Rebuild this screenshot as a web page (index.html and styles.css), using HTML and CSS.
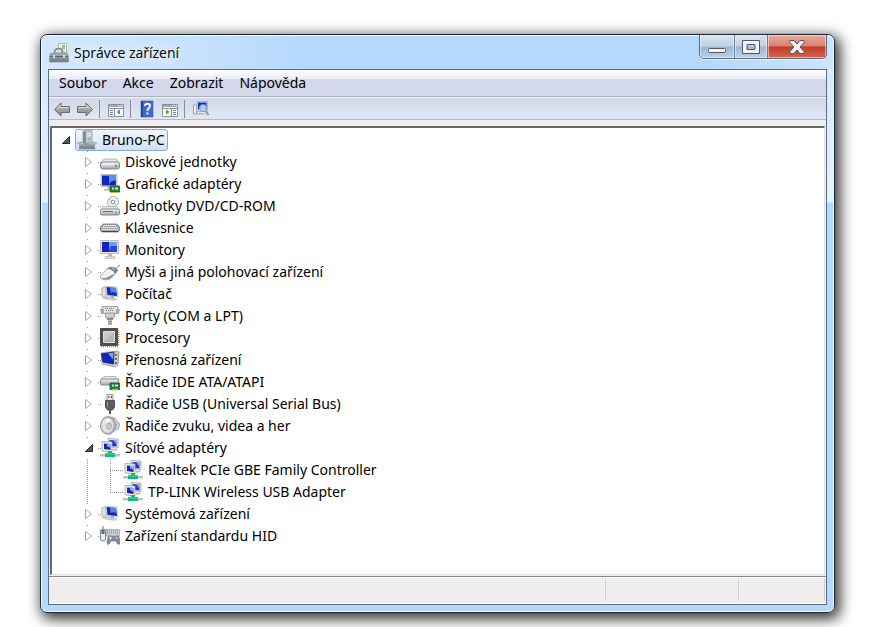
FILE: index.html
```html
<!DOCTYPE html>
<html lang="cs">
<head>
  <meta charset="UTF-8" />
  <meta name="viewport" content="width=device-width, initial-scale=1.0"/>
  <title>Správce zařízení</title>
  <link rel="stylesheet" href="styles.css">
</head>
<body>

  <!-- icon set -->
  <svg class="sprite" aria-hidden="true">
    <defs>
      <linearGradient id="gray" x1="0" y1="0" x2="0" y2="1">
        <stop offset="0" stop-color="#f4f5f6"/><stop offset="1" stop-color="#a3a8ae"/>
      </linearGradient>
      <linearGradient id="dark" x1="0" y1="0" x2="0" y2="1">
        <stop offset="0" stop-color="#a9b4bd"/><stop offset="1" stop-color="#6b7680"/>
      </linearGradient>
      <linearGradient id="blue" x1="0" y1="0" x2="1" y2=".3">
        <stop offset="0" stop-color="#0a1ea8"/><stop offset=".45" stop-color="#1230d0"/><stop offset=".6" stop-color="#6f9af5"/><stop offset="1" stop-color="#1c45e0"/>
      </linearGradient>
      <linearGradient id="arrow" x1="0" y1="0" x2="0" y2="1">
        <stop offset="0" stop-color="#c4c4c4"/><stop offset="1" stop-color="#858585"/>
      </linearGradient>
    </defs>
    <symbol id="i-app" viewBox="0 0 20 20">
      <path d="M9.500.500h8v10h-8z" fill="#eef1ec" stroke="#b3bab5"/>
      <path d="M13 2h3v4h-3z" fill="#8fce6f"/>
      <path d="M5 10l2-4h6l3 4z" fill="#dfe4e7" stroke="#929ba2" stroke-width=".7"/>
      <path d="M5.500 10c0-6 8-6 8 0" fill="none" stroke="#7c868e" stroke-width="1.300"/>
      <path d="M2 10h16l1.500 3v6H.5v-6z" fill="url(#dark)" stroke="#848e96" stroke-width=".7"/>
      <path d="M1 13.500h18" stroke="#5a646c"/>
      <path d="M4 12h2v3H4zM14 12h2v3h-2z" fill="#d4dade"/>
    </symbol>
    <symbol id="i-pc" viewBox="0 0 20 20">
      <path d="M6 1l6-1 3 1v13l-6 1-3-1z" fill="#c3c8cc" stroke="#8d949b" stroke-width=".7"/>
      <path d="M6 1l3 1v13l-3-1z" fill="#858d94"/>
      <path d="M10 4l4-.5M10 6l4-.5" stroke="#f3f4f5"/>
      <circle cx="12" cy="9" r="1" fill="#56cb57"/>
      <path d="M3 13h14l1 6H2z" fill="url(#dark)" stroke="#8b959d" stroke-width=".7"/>
      <path d="M0 13l4-1 5 2 7-2 4 1-3 2-7-1-7 1z" fill="#b4bdc4" stroke="#8b959d" stroke-width=".5"/>
    </symbol>
    <symbol id="i-disk" viewBox="0 0 20 20">
      <path d="M4 7h12l3 4H1z" fill="#e3e5e6" stroke="#b3b7ba"/>
      <rect x=".5" y="10" width="19" height="7" rx="2" fill="url(#gray)" stroke="#85898d"/>
      <path d="M3 12h11" stroke="#fff"/>
      <circle cx="16" cy="14" r="1.200" fill="#3dcb41"/>
    </symbol>
    <symbol id="i-monitor" viewBox="0 0 20 20">
      <path d="M.5.500h18v13H.5z" fill="#e6e4dc" stroke="#bfbeb6"/>
      <path d="M2 2h15v10H2z" fill="#1026bd"/>
      <path d="M9 2h8v5c-4 0-7 1-8 4z" fill="#7499f3"/>
      <path d="M11 6h6v6H9c0-3 1-5 2-6z" fill="#2347df"/>
      <path d="M8 14h4v3H8z" fill="#bab9b2"/>
      <path d="M5 16.500h10v2H5z" fill="#e2e0d7" stroke="#b5b4ad" stroke-width=".6"/>
    </symbol>
    <symbol id="i-gpu" viewBox="0 0 20 20">
      <path d="M1 .500h16v12H1z" fill="#e2e0d7" stroke="#bfbeb6"/>
      <path d="M2 1.500h14v10H2z" fill="#1026bd"/>
      <path d="M9 1.500h7v5c-4 0-6 1-7 4z" fill="#6289ef"/>
      <path d="M7 13h4v2H7zM4 15h9v2H4z" fill="#c5c4bd"/>
      <path d="M10 12h9.500v6H10z" fill="#2e7b45" stroke="#17532a" stroke-width=".8"/>
      <path d="M12 13.500h2v2h-2zM15 13.500h3v2h-3z" fill="#c3e3b4"/>
      <path d="M12 18h5v1h-5z" fill="#d4b644"/>
    </symbol>
    <symbol id="i-dvd" viewBox="0 0 20 20">
      <circle cx="13" cy="6" r="5.500" fill="#edf0ef" stroke="#b2b7ba"/>
      <path d="M13 6l-4-3M13 6l4 4" stroke="#a4d8a7"/>
      <circle cx="13" cy="6" r="1.800" fill="#fff" stroke="#8b8f92"/>
      <path d="M3 10.500h14l2 3H1z" fill="#e3e5e6" fill-opacity=".8" stroke="#aaaeb2" stroke-width=".8"/>
      <rect x=".5" y="13" width="19" height="6" rx="1.500" fill="url(#gray)" stroke="#85898d"/>
      <path d="M3 15.500h10" stroke="#686d71"/>
      <circle cx="16" cy="16.500" r="1" fill="#3dbb41"/>
    </symbol>
    <symbol id="i-keyboard" viewBox="0 0 20 20">
      <path d="M3 6h14l2.500 3v3.500q-1 1.500-2 1.500h-15q-1 0-2-1.500V9z" fill="#a4a7aa" stroke="#73787c" stroke-width=".8"/>
      <path d="M3.500 7.500h13M2.500 9.500h15M2 11.500h16" stroke="#f7f7f7" stroke-width="1.200" stroke-dasharray="1.500 .7"/>
      <path d="M2 13.500h16" stroke="#43484c"/>
    </symbol>
    <symbol id="i-mouse" viewBox="0 0 20 20">
      <path d="M15 7c3 0 2-3 5-4" fill="none" stroke="#777c80"/>
      <path d="M.5 15c0-2 5-7 8-9 3-2 10 0 9 3l-6 7c-3 3-11 2-11-1z" fill="#f0f1f2" stroke="#8b9094" stroke-width=".7"/>
      <path d="M8 6c3-2 10 0 9.500 3L15 12c-1-3-4-5-8-5z" fill="#777c80"/>
      <path d="M12 6l3 2" stroke="#d5d7d9"/>
      <path d="M15 12l-4 4c-3 2-8 2-10 0 7 1 8-3 14-4z" fill="#8e9397"/>
    </symbol>
    <symbol id="i-computer" viewBox="0 0 20 20">
      <path d="M2 4l4-1v11l-4-2z" fill="#e3e4e3" stroke="#9b9e9d" stroke-width=".8"/>
      <path d="M5 2l12 1 1 10-11-1z" fill="#e6e4dc" stroke="#b5b4ae" stroke-width=".6"/>
      <path d="M6.500 3l9.500 1 1 8-9.500-1z" fill="#1026bd"/>
      <path d="M10 3.300l6 .7.500 5c-3-1-5-1-6 0z" fill="#5b82ee"/>
      <path d="M11 12h3v2h-3z" fill="#aaa"/>
      <path d="M3 13.500l4-.5 10 2-3 1.500-11-2z" fill="#d3d4d4" stroke="#aaa" stroke-width=".5"/>
    </symbol>
    <symbol id="i-port" viewBox="0 0 20 20">
      <path d="M2 .500h16l-1 7H3z" fill="#e3e5e6" stroke="#898f94" stroke-width=".8"/>
      <path d="M0 3h4v5H1zM16 3h4l-1 5h-3z" fill="#a5aaae"/>
      <path d="M5 2.500h10M6 4.500h8" stroke="#666b6f" stroke-dasharray="1 1"/>
      <path d="M5 7h10l-1 5H6z" fill="#cdd0d2" stroke="#898f94" stroke-width=".8"/>
      <path d="M7 12h6v2H7z" fill="#8b9094"/>
      <path d="M8 14h4v5H8z" fill="#c0c4c7"/><path d="M8 15.500h4M8 17.500h4" stroke="#898e92"/>
    </symbol>
    <symbol id="i-cpu" viewBox="0 0 20 20">
      <path d="M0 0h18v18H0z" fill="#4c4e50"/>
      <path d="M18.500 2v16M1 18.500h17" stroke="#a78d48" stroke-width="1.500" stroke-dasharray="1 1"/>
      <path d="M3.500 3.500h11v11h-11z" fill="#c6c9cb" stroke="#d9dbdc"/>
      <path d="M4 14L14 4v10z" fill="#b4b8ba"/>
    </symbol>
    <symbol id="i-portable" viewBox="0 0 20 20">
      <path d="M1 3l16-2 2 1-1 13-3 2L2 14z" fill="#c9ccd0" stroke="#777c80" stroke-width=".6"/>
      <path d="M1.500 4L14 2l-.5 12L3 12z" fill="#1026bd" stroke="#111b50" stroke-width=".8"/>
      <path d="M8 3.500l5.500-1-.3 7z" fill="#7fa4f6"/>
      <path d="M16 4v2M16 8v2M16 12v2" stroke="#4c5154" stroke-width="1.500"/>
      <path d="M18 3h1v3h-1z" fill="#b59a5b"/>
    </symbol>
    <symbol id="i-ide" viewBox="0 0 20 20">
      <path d="M4 4.500h12l3 3H1z" fill="#e9ebec" stroke="#b3b7ba"/>
      <rect x=".5" y="7" width="18" height="6" rx="1.500" fill="url(#gray)" stroke="#85898d"/>
      <path d="M10 11h9.500v6.500H10z" fill="#2e7b45" stroke="#17532a" stroke-width=".8"/>
      <path d="M12 12.500h2v2h-2zM15 12.500h3v2h-3z" fill="#c3e3b4"/>
      <path d="M12 17h6v1.500h-6z" fill="#d4b644"/>
    </symbol>
    <symbol id="i-usb" viewBox="0 0 20 20">
      <path d="M7 .500h6v6H7z" fill="#e0e2e3" stroke="#999ea2"/>
      <path d="M8.500 2h1v2h-1zM11 2h1v2h-1z" fill="#55595c"/>
      <path d="M5.500 6.500h9v7l-2 2.500h-5l-2-2.500z" fill="#5b5f62" stroke="#4e5255"/>
      <path d="M7.500 8v5" stroke="#929699"/>
      <path d="M9 16h2v4H9z" fill="#53575a"/>
    </symbol>
    <symbol id="i-sound" viewBox="0 0 20 20">
      <path d="M9 1l6 1 4.500 6-1 5L9 18z" fill="#b4b8bb" stroke="#8d9296" stroke-width=".7"/>
      <path d="M15 3l3 6-1 4-4 3" fill="none" stroke="#e4e6e7"/>
      <ellipse cx="8" cy="9.500" rx="7.500" ry="9" fill="#b3b7ba" stroke="#8a8f93" stroke-width=".7"/>
      <ellipse cx="7.500" cy="9.500" rx="5.800" ry="7.300" fill="#dfe1e3"/>
      <path d="M7.500 9.500l-3-5.500q3-3 6.500 0z" fill="#f6f6f6"/>
      <ellipse cx="9" cy="10" rx="2.500" ry="3.500" fill="#c7cbcd" stroke="#9ba0a3" stroke-width=".7"/>
    </symbol>
    <symbol id="i-net" viewBox="0 0 20 20">
      <path d="M8 .500l10 .5v9l-10-.5z" fill="#e7e6df" stroke="#a2a3a3" stroke-width=".8"/>
      <path d="M9.500 2l7 .5v6l-7-.5z" fill="#1c38ce"/>
      <path d="M13 2.300l3.500.2v4z" fill="#8eacf7"/>
      <path d="M2 3.500l10 .5v10l-10-1z" fill="#eeede7" stroke="#a2a3a3" stroke-width=".8"/>
      <path d="M4 5.500l6.500.5v6L4 11z" fill="#1026bd"/>
      <path d="M7 5.700l3.500.3v4L7 8z" fill="#8eacf7"/>
      <path d="M13 11h4v1.500h-4z" fill="#b7b7b2"/>
      <path d="M0 16h20v2.500H0z" fill="#bcc4c6"/>
      <path d="M5 15h10v4H5zM8 13h4v3H8z" fill="#0fba75"/>
      <path d="M5 16h10" stroke="#4fd996"/>
    </symbol>
    <symbol id="i-hid" viewBox="0 0 20 20">
      <path d="M6 3.500h13.500V10H6z" fill="#cdd0d3" stroke="#9ea3a7" stroke-width=".7"/>
      <path d="M7 5h12M7 7h12" stroke="#7d8286" stroke-dasharray="1 1"/>
      <path d="M.5 4q2.500-2 5 0v10q-2.500 2-5 0z" fill="#eceeef" stroke="#63686c" stroke-width=".8"/>
      <path d="M3 0v3" stroke="#777"/>
      <path d="M1.500 4h3v4h-3z" fill="#63686c"/>
      <path d="M8 10.500q2-1.500 4 0h3q2-1.500 4 0l1 6.500q-1 3-3 0l-1-2h-5l-1 2q-2 3-3 0z" fill="#858d9a" stroke="#656c78" stroke-width=".6"/>
      <path d="M9 12h3M10.500 10.500v3M15.500 12h2" stroke="#e5e9ed"/>
    </symbol>
    <symbol id="i-back" viewBox="0 0 18 18">
      <path d="M1.500 9.500L8 3v3.500h8.500v6H8V16z" fill="url(#arrow)" stroke="#6c6c6c"/>
      <path d="M3.500 9L7 5.500v2h8.500" fill="none" stroke="#d8d8d8"/>
    </symbol>
    <symbol id="i-forward" viewBox="0 0 18 18">
      <path d="M16.500 9.500L10 3v3.500H1.500v6H10V16z" fill="url(#arrow)" stroke="#6c6c6c"/>
      <path d="M14.500 9L11 5.500v2H2.500" fill="none" stroke="#d8d8d8"/>
    </symbol>
    <symbol id="i-tree" viewBox="0 0 18 18">
      <path d="M1.500 4.500h15v12h-15z" fill="#fff" stroke="#8b909b"/>
      <path d="M2 5h14v2H2z" fill="#a2a8b4"/>
      <path d="M11 5.500h1M13 5.500h1M15 5.500h1" stroke="#fff"/>
      <path d="M1 8.500h16M7.500 8v8" stroke="#8b909b"/>
      <path d="M3 10.500h3M3 12.500h3M3 14.500h3" stroke="#6c87b0"/>
      <path d="M13 9.500v5L9.500 12z" fill="#35ae2a"/>
    </symbol>
    <symbol id="i-help" viewBox="0 0 18 18">
      <path d="M3 1h12v16H3z" fill="#3f69cf" stroke="#3a5cb4" stroke-width=".6"/>
      <path d="M3 1h2v16H3z" fill="#2345a6"/>
      <path d="M7 6c0-3 5-3 5 0 0 2-2.500 2-2.500 5" fill="none" stroke="#fff" stroke-width="1.800"/>
      <path d="M8.500 12.500h2v2h-2z" fill="#fff"/>
    </symbol>
    <symbol id="i-pane" viewBox="0 0 18 18">
      <path d="M1.500 4.500h15v12h-15z" fill="#fff" stroke="#8b909b"/>
      <path d="M2 5h14v2H2z" fill="#a2a8b4"/>
      <path d="M11 5.500h1M13 5.500h1M15 5.500h1" stroke="#fff"/>
      <path d="M1 8.500h16M10.500 8v8" stroke="#8b909b"/>
      <path d="M12 10.500h3M12 12.500h3M12 14.500h3" stroke="#6c87b0"/>
      <path d="M5 9.500v5L8.500 12z" fill="#35ae2a"/>
    </symbol>
    <symbol id="i-scan" viewBox="0 0 18 18">
      <path d="M1.500 5h3v9h-3z" fill="#eee" stroke="#8b9094" stroke-width=".8"/>
      <path d="M5 1.500h10.500v10H5z" fill="#e7e6df" stroke="#aaaba9" stroke-width=".8"/>
      <path d="M6 2.500h8.500v7H6z" fill="#1230c4"/>
      <path d="M4 13h8v1.500H4z" fill="#b4b8bb"/>
      <circle cx="11" cy="8" r="3.500" fill="#bddcf8" fill-opacity=".9" stroke="#7c9cc4"/>
      <path d="M13.500 11l3 4" stroke="#91969b" stroke-width="2"/>
    </symbol>
    <symbol id="i-closed" viewBox="0 0 10 10">
      <path d="M1.500.500v9L7.500 5z" fill="#fff" stroke="#a6a6a6"/>
    </symbol>
    <symbol id="i-open" viewBox="0 0 10 10">
      <path d="M8.500 1.500v7h-7z" fill="#595959" stroke="#262626"/>
    </symbol>
  </svg>

  <main class="window">
    <header class="titlebar">
      <svg class="icon"><use href="#i-app"/></svg>
      <h1>Správce zařízení</h1>
      <div class="caption">
        <button class="min" aria-label="Minimalizovat">
          <svg width="18" height="6"><rect x=".5" y=".5" width="17" height="4" rx="1"/></svg>
        </button>
        <button class="max" aria-label="Maximalizovat">
          <svg width="18" height="14"><path d="M.5.500h17v13H.5zM5 4.500v5h8v-5z" fill-rule="evenodd"/></svg>
        </button>
        <button class="close" aria-label="Zavřít">
          <svg width="16" height="14"><path d="M1 .500h4l3 3.500 3-3.500h4v2L11 7l4 4.500v2h-4L8 10l-3 3.500H1v-2L5 7 1 2.500z"/></svg>
        </button>
      </div>
    </header>

    <div class="client">
      <nav class="menu">
        <button>Soubor</button>
        <button>Akce</button>
        <button>Zobrazit</button>
        <button>Nápověda</button>
      </nav>

      <div class="toolbar">
        <button aria-label="Zpět"><svg><use href="#i-back"/></svg></button>
        <button aria-label="Vpřed"><svg><use href="#i-forward"/></svg></button>
        <span class="sep"></span>
        <button aria-label="Strom konzoly"><svg><use href="#i-tree"/></svg></button>
        <span class="sep"></span>
        <button aria-label="Nápověda"><svg><use href="#i-help"/></svg></button>
        <button aria-label="Podokno akcí"><svg><use href="#i-pane"/></svg></button>
        <span class="sep"></span>
        <button aria-label="Vyhledat změny hardwaru"><svg><use href="#i-scan"/></svg></button>
      </div>

      <div class="tree">
        <ul>
          <li>
            <div class="row"><button class="toggle" aria-label="Sbalit"><svg><use href="#i-open"/></svg></button><span class="label selected"><svg class="icon"><use href="#i-pc"/></svg>Bruno-PC</span></div>
            <ul class="branch">
              <li><div class="row"><button class="toggle" aria-label="Rozbalit"><svg><use href="#i-closed"/></svg></button><span class="label"><svg class="icon"><use href="#i-disk"/></svg>Diskové jednotky</span></div></li>
              <li><div class="row"><button class="toggle" aria-label="Rozbalit"><svg><use href="#i-closed"/></svg></button><span class="label"><svg class="icon"><use href="#i-gpu"/></svg>Grafické adaptéry</span></div></li>
              <li><div class="row"><button class="toggle" aria-label="Rozbalit"><svg><use href="#i-closed"/></svg></button><span class="label"><svg class="icon"><use href="#i-dvd"/></svg>Jednotky DVD/CD-ROM</span></div></li>
              <li><div class="row"><button class="toggle" aria-label="Rozbalit"><svg><use href="#i-closed"/></svg></button><span class="label"><svg class="icon"><use href="#i-keyboard"/></svg>Klávesnice</span></div></li>
              <li><div class="row"><button class="toggle" aria-label="Rozbalit"><svg><use href="#i-closed"/></svg></button><span class="label"><svg class="icon"><use href="#i-monitor"/></svg>Monitory</span></div></li>
              <li><div class="row"><button class="toggle" aria-label="Rozbalit"><svg><use href="#i-closed"/></svg></button><span class="label"><svg class="icon"><use href="#i-mouse"/></svg>Myši a jiná polohovací zařízení</span></div></li>
              <li><div class="row"><button class="toggle" aria-label="Rozbalit"><svg><use href="#i-closed"/></svg></button><span class="label"><svg class="icon"><use href="#i-computer"/></svg>Počítač</span></div></li>
              <li><div class="row"><button class="toggle" aria-label="Rozbalit"><svg><use href="#i-closed"/></svg></button><span class="label"><svg class="icon"><use href="#i-port"/></svg>Porty (COM a LPT)</span></div></li>
              <li><div class="row"><button class="toggle" aria-label="Rozbalit"><svg><use href="#i-closed"/></svg></button><span class="label"><svg class="icon"><use href="#i-cpu"/></svg>Procesory</span></div></li>
              <li><div class="row"><button class="toggle" aria-label="Rozbalit"><svg><use href="#i-closed"/></svg></button><span class="label"><svg class="icon"><use href="#i-portable"/></svg>Přenosná zařízení</span></div></li>
              <li><div class="row"><button class="toggle" aria-label="Rozbalit"><svg><use href="#i-closed"/></svg></button><span class="label"><svg class="icon"><use href="#i-ide"/></svg>Řadiče IDE ATA/ATAPI</span></div></li>
              <li><div class="row"><button class="toggle" aria-label="Rozbalit"><svg><use href="#i-closed"/></svg></button><span class="label"><svg class="icon"><use href="#i-usb"/></svg>Řadiče USB (Universal Serial Bus)</span></div></li>
              <li><div class="row"><button class="toggle" aria-label="Rozbalit"><svg><use href="#i-closed"/></svg></button><span class="label"><svg class="icon"><use href="#i-sound"/></svg>Řadiče zvuku, videa a her</span></div></li>
              <li>
                <div class="row"><button class="toggle" aria-label="Sbalit"><svg><use href="#i-open"/></svg></button><span class="label"><svg class="icon"><use href="#i-net"/></svg>Síťové adaptéry</span></div>
                <ul class="branch">
                  <li><div class="row"><span class="stub"></span><span class="label"><svg class="icon"><use href="#i-net"/></svg>Realtek PCIe GBE Family Controller</span></div></li>
                  <li><div class="row"><span class="stub"></span><span class="label"><svg class="icon"><use href="#i-net"/></svg>TP-LINK Wireless USB Adapter</span></div></li>
                </ul>
              </li>
              <li><div class="row"><button class="toggle" aria-label="Rozbalit"><svg><use href="#i-closed"/></svg></button><span class="label"><svg class="icon"><use href="#i-computer"/></svg>Systémová zařízení</span></div></li>
              <li><div class="row"><button class="toggle" aria-label="Rozbalit"><svg><use href="#i-closed"/></svg></button><span class="label"><svg class="icon"><use href="#i-hid"/></svg>Zařízení standardu HID</span></div></li>
            </ul>
          </li>
        </ul>
      </div>

      <footer class="status">
        <span class="wide"></span>
        <span class="mid"></span>
        <span class="narrow"></span>
      </footer>
    </div>
  </main>

</body>
</html>
```
FILE: styles.css
```css
* {
  box-sizing: border-box;
}
body {
  display: flex;
  min-height: 100vh;
  margin: 0;
  padding: 34px 39px 14px 40px;
  background: #fff;
  color: #000;
  font-family: "Noto Sans", "Open Sans", sans-serif;
  font-size: 14px;
  line-height: 20px;
}
button {
  padding: 0;
  border: 0;
  background: none;
  color: inherit;
  font: inherit;
}
ul {
  margin: 0;
  padding: 0;
  list-style: none;
}
.sprite {
  position: absolute;
  width: 0;
  height: 0;
}
.icon {
  flex: none;
  width: 20px;
  height: 20px;
}

/* window frame */
.window {
  display: flex;
  flex: 1;
  flex-direction: column;
  padding: 0 6px 6px;
  border: 1px solid #1c2632;
  border-radius: 7px;
  background: linear-gradient(#d2e6fc, #e4f1ff 167px, #b5d8fd 168px);
  box-shadow: inset 0 0 0 1px #f2f9ff, 3px 4px 14px 2px rgba(0, 0, 0, 0.8);
}
.titlebar {
  display: flex;
  align-items: center;
  gap: 5px;
  height: 34px;
  margin: 0 -5px;
  padding-left: 7px;
  border-top: 1px solid #f2f9ff;
  border-radius: 6px 6px 0 0;
  background: linear-gradient(to right, #d3e8fd, #c9e2fc 140px, #b5d9fd 260px, #b5d9fd 85%, #cde3fb);
}
.titlebar h1 {
  flex: 1;
  margin: 0;
  font-family: "Open Sans", "Noto Sans", sans-serif;
  font-size: 14px;
  font-weight: normal;
  text-shadow: 0 0 8px #fff, 0 0 12px #fff;
}

/* caption buttons */
.caption {
  display: flex;
  align-self: flex-start;
  height: 24px;
  margin: -1px 6px 0 0;
  border: 1px solid #56697f;
  border-top: 0;
  border-radius: 0 0 5px 5px;
  overflow: hidden;
  box-shadow: 0 1px 0 #e8f4ff;
}
.caption button {
  display: flex;
  align-items: center;
  justify-content: center;
  width: 33px;
  border-right: 1px solid #687c94;
  background: linear-gradient(#d6e4f1, #c2d3e5 48%, #9eb6d0 52%, #b9d0e8);
  box-shadow: inset 0 0 0 1px rgba(255, 255, 255, 0.5);
}
.caption .min {
  width: 35px;
  padding-top: 9px;
}
.caption .close {
  width: 58px;
  border-right: 0;
  background: linear-gradient(#e9a99b, #d98270 48%, #c23a25 52%, #d4674d);
}
.caption svg {
  fill: #f5f5f5;
  stroke: #50586a;
}

/* content */
.client {
  display: flex;
  flex: 1;
  flex-direction: column;
  margin: 0 1px 1px;
  border: 1px solid #5b6c7f;
  background: #f0eded;
}
.menu {
  display: flex;
  gap: 16px;
  height: 27px;
  padding: 0 10px;
  border-bottom: 1px solid #acb0b8;
  background: linear-gradient(#fff, #e9edf7 9px, #d4d8eb 9px);
}
.toolbar {
  display: flex;
  align-items: center;
  gap: 5px;
  height: 23px;
  padding: 0 4px;
  border-top: 1px solid #f4f5fb;
  border-bottom: 1px solid #b4b9ca;
  background: linear-gradient(#d3d8ea, #e2e6f4);
}
.toolbar svg {
  display: block;
  width: 18px;
  height: 18px;
}
.toolbar .sep {
  width: 1px;
  height: 18px;
  margin-right: 2px;
  background: #858b99;
}

/* device tree */
.tree {
  flex: 1;
  margin: 6px 1px 0;
  padding: 1px 2px;
  border: 1px solid #e3e3e3;
  border-top: 2px solid #696969;
  border-left: 2px solid #696969;
  background: #fff;
}
.row {
  display: flex;
  height: 22px;
}
.label {
  display: flex;
  align-items: center;
  gap: 5px;
  padding: 0 3px 0 1px;
  border: 1px solid transparent;
  border-radius: 3px;
  white-space: nowrap;
}
.label.selected {
  border-color: #84acdd;
  background: linear-gradient(#f1f6fd, #cfe1fa);
}
.toggle,
.stub {
  flex: none;
  width: 21px;
}
.toggle {
  display: flex;
  align-items: center;
  justify-content: center;
  height: 20px;
  margin: 1px 0;
  padding-left: 3px;
  background: #fff;
}
.toggle svg {
  width: 10px;
  height: 10px;
}
.branch {
  padding-left: 23px;
}
.branch li {
  background: repeating-linear-gradient(#999 0 1px, transparent 1px 2px) 10px 0 / 1px 100% no-repeat;
}
.branch li:last-child {
  background-size: 1px 12px;
}
.branch .row {
  background: repeating-linear-gradient(to right, #999 0 1px, transparent 1px 2px) 21px 11px / 3px 1px no-repeat;
}
.branch .branch .row {
  background-position: 10px 11px;
  background-size: 13px 1px;
}

/* status bar */
.status {
  display: flex;
  height: 28px;
  margin-top: 1px;
  padding: 1px 1px 2px;
  border-top: 1px solid #84888e;
  border-bottom: 1px solid #fff;
  box-shadow: inset 0 1px 0 #fff;
}
.status span {
  border-right: 1px solid #d0d0d0;
}
.status .wide {
  flex: 1;
}
.status .mid {
  width: 133px;
}
.status .narrow {
  width: 86px;
}
```
